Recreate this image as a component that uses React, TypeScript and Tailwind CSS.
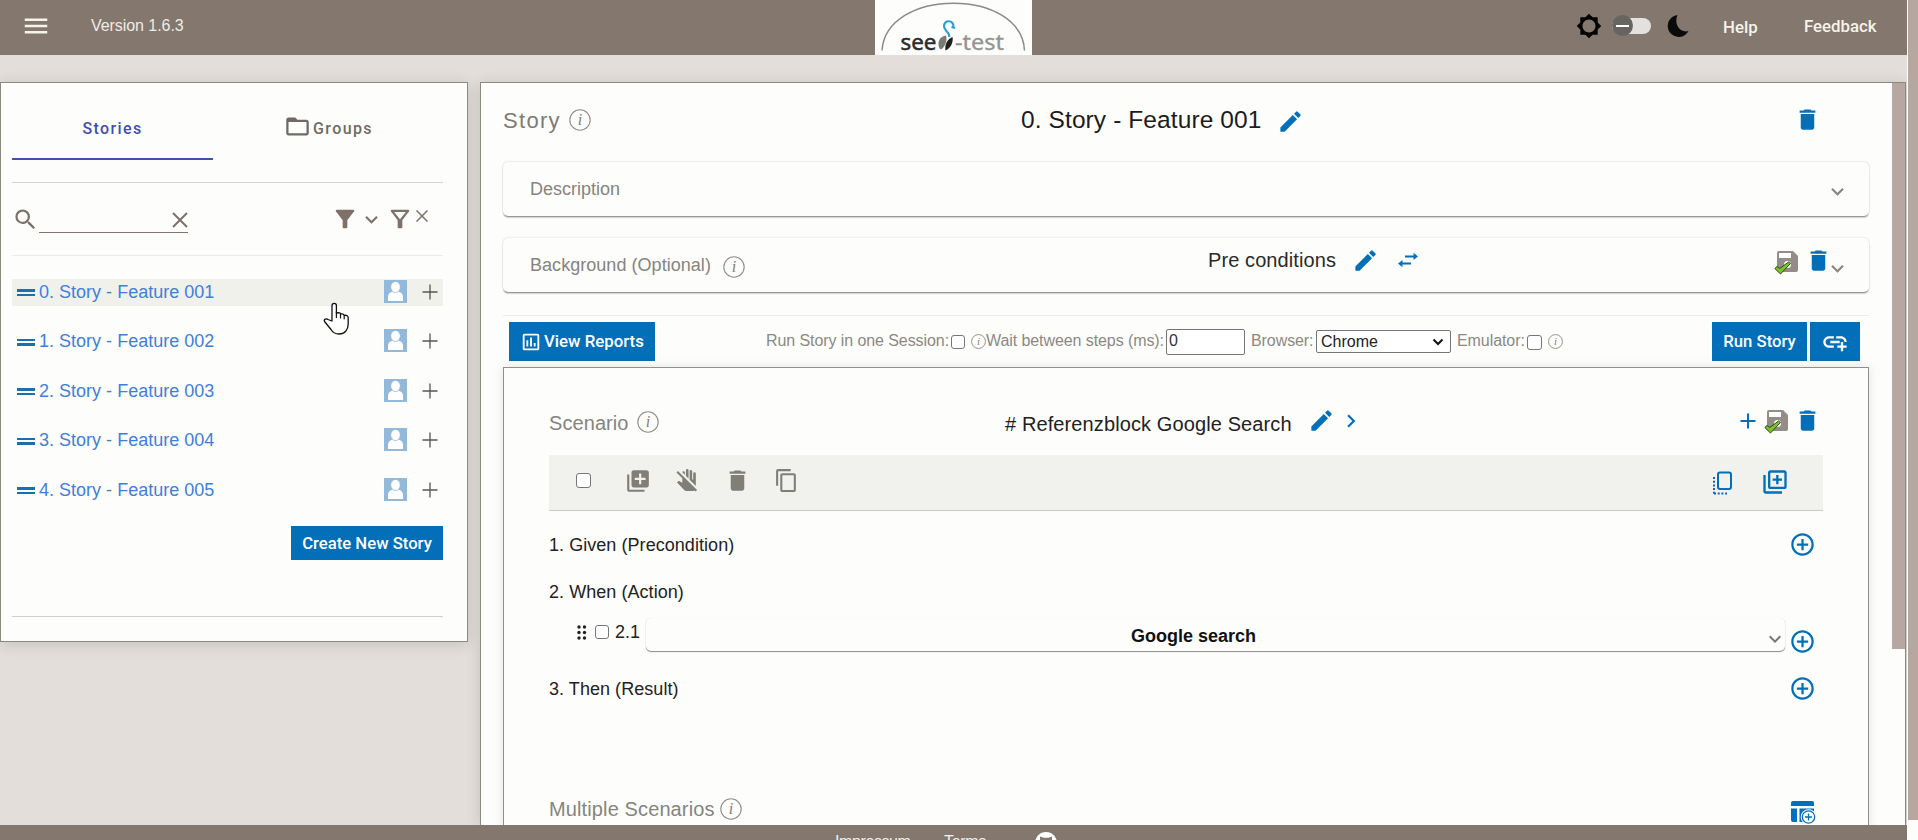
import type { ReactNode } from 'react';
import {
  MdAddCircleOutline,
  MdAddLink,
  MdBrightness5,
  MdContentCopy,
  MdDelete,
  MdDoNotTouch,
  MdEdit,
  MdExpandMore,
  MdChevronRight,
  MdFilterAlt,
  MdFolderOpen,
  MdLibraryAdd,
  MdMenu,
  MdOutlineAssessment,
  MdOutlineFilterAlt,
  MdOutlineLibraryAdd,
  MdSearch,
} from 'react-icons/md';

const stories = ['001', '002', '003', '004', '005'];

function Info({ className = '', small = false }: { className?: string; small?: boolean }) {
  return (
    <svg viewBox="0 0 22 22" className={`${small ? 'size-[15px]' : 'size-[22px]'} shrink-0 ${className}`}>
      <circle cx="11" cy="11" r="10.2" fill="none" stroke="#8f8d8a" strokeWidth={small ? 1.4 : 1.1} />
      <text x="11" y="16" textAnchor="middle" fontSize="16" fontStyle="italic" fill="#807e7a" fontFamily="Liberation Serif, serif">i</text>
    </svg>
  );
}

function Box({ className = '' }: { className?: string }) {
  return <span className={`shrink-0 rounded-[3px] border border-[#767676] bg-white ${className}`} />;
}

function Plus({ className = '', width = 1.5 }: { className?: string; width?: number }) {
  return (
    <svg viewBox="0 0 16 16" className={`size-4 shrink-0 ${className}`} stroke="currentColor" strokeWidth={width}>
      <path d="M8 .5v15M.5 8h15" />
    </svg>
  );
}

function SaveCheck({ className = '' }: { className?: string }) {
  return (
    <svg viewBox="0 0 25 25" className={`size-[25px] shrink-0 ${className}`}>
      <path d="M5 1h14l5 5v14q0 2-2 2H5q-2 0-2-2V3q0-2 2-2z" fill="#938c87" />
      <path d="M5 3h12v5H5z" fill="#fff" />
      <circle cx="13.500" cy="14.500" r="3.500" fill="#fff" />
      <path d="M.8 18.500l2.200-2 2.800 2L14.500 12l2 1.500L6.500 24z" fill="#7cc22e" stroke="#2e4a12" strokeWidth="1" strokeLinejoin="round" />
    </svg>
  );
}

function Avatar() {
  return (
    <svg viewBox="0 0 23 23" className="mb-[3px] ml-auto size-[23px] shrink-0">
      <path d="M0 0h23v23H0z" fill="#92b8da" />
      <path d="M4 21v-4.500q0-3.500 4.500-5h6q4.500 1.500 4.500 5V21z" fill="#fff" />
      <ellipse cx="11.500" cy="7" rx="4.800" ry="5.600" fill="#fff" stroke="#92b8da" strokeWidth=".8" />
    </svg>
  );
}

function Logo() {
  return (
    <div className="ml-[692px] h-[55px] w-[157px] shrink-0 bg-[#fdfdfb]">
      <svg viewBox="0 0 157 55" className="h-[55px] w-[157px]">
        <path d="M7 50.500C9 20 42 3.200 78.500 3.200S148 20 149.500 50.500" fill="none" stroke="#8b8b8b" strokeWidth="1.500" />
        <g fontFamily="Noto Sans, sans-serif" fontSize="22.500">
          <text x="25.500" y="49.500" textLength="36" lengthAdjust="spacingAndGlyphs" fill="#2b2b2b" stroke="#2b2b2b" strokeWidth=".5">see</text>
          <text x="80" y="49.500" textLength="49" lengthAdjust="spacingAndGlyphs" fill="#939393" stroke="#939393" strokeWidth=".3">-test</text>
        </g>
        <path d="M64.500 48.500C61.500 42 65 36.500 71 35.500c1.500 5.500-1 10-3.500 13-1 1-2.200 1-3 0z" fill="#7a7a78" />
        <path d="M70.500 50.500C69.500 45 72 39 77.500 37c1 5-1.500 11-7 13.500z" fill="#1f1f1d" />
        <path d="M74 37c1.500-5-5-5-5-11 0-6.500 10-6.500 9.500 1M76.500 27l3.500 1" fill="none" stroke="#2b9fd2" strokeWidth="2.200" />
      </svg>
    </div>
  );
}

function Header() {
  return (
    <header className="flex h-[55px] shrink-0 items-center bg-[#84776e] font-[Roboto] text-[16.800px] text-[#f6f4ea]">
      <MdMenu className="-mt-1 ml-[21px] size-[30px] shrink-0" />
      <span className="-mt-1 ml-10 w-[92px] font-['Liberation_Sans'] text-[16px] tracking-[-0.060px] whitespace-nowrap text-[#eeece6]">Version 1.6.3</span>
      <Logo />
      <MdBrightness5 className="-mt-1 ml-[544px] size-[26px] shrink-0 text-black" />
      <span className="-mt-1 ml-[10px] flex h-4 w-[39px] shrink-0 items-center rounded-full bg-[#e4e0de]">
        <span className="flex size-[21px] shrink-0 items-center justify-center rounded-full bg-[#686462]">
          <span className="h-[2px] w-[13px] bg-white" />
        </span>
      </span>
      <svg viewBox="0 0 22 22" className="-mt-1 ml-[16px] size-[22px] shrink-0">
        <path d="M10.500 0A11 11 0 1 0 21.500 16C13 18.500 6.500 9 10.500 0z" fill="#0a0a0a" />
      </svg>
      <span className="ml-[34px] w-[81px] font-medium">Help</span>
      <span className="-mt-px font-medium">Feedback</span>
    </header>
  );
}

function StoryRow({ index, code }: { index: number; code: string }) {
  return (
    <li className={`flex h-[27px] shrink-0 items-center pr-[5px] pl-[5px] ${index === 0 ? 'bg-[#f1f1ec]' : ''}`}>
      <span className="flex h-[7px] w-[18px] shrink-0 flex-col justify-between">
        <span className="h-[2.500px] bg-[#1a6fb0]" />
        <span className="h-[2.500px] bg-[#1a6fb0]" />
      </span>
      <span className="-mt-px ml-[4px] text-[18px] tracking-[0.010px] whitespace-nowrap text-[#3f7fdc]">{`${index}. Story - Feature ${code}`}</span>
      <Avatar />
      <Plus className="-mt-[2px] ml-[15px] text-[#555]" width={1.3} />
    </li>
  );
}

function Sidebar() {
  return (
    <aside className="flex h-[560px] w-[468px] shrink-0 flex-col border border-[#8b8a80] bg-[#fdfdfb] pr-[24px] pl-[11px] shadow-[0_2px_14px_rgba(0,0,0,0.14)]">
      <div className="flex h-[77px] shrink-0 font-[Roboto] text-[16px] font-medium tracking-[1.400px]">
        <div className="flex w-[201px] items-center justify-center border-b-2 border-[#3f51b5] pt-[16px] text-[#3f4fb0]">Stories</div>
        <div className="flex items-center pt-[14px] pl-[71px] text-[#6f6a65]">
          <MdFolderOpen className="-mt-[4px] size-[27px]" />
          <span className="ml-[2px]">Groups</span>
        </div>
      </div>
      <div className="mt-[22px] h-px shrink-0 bg-[#d3d3cf]" />
      <div className="flex h-[72px] shrink-0 items-center text-[#7d716a]">
        <MdSearch className="size-[27px] shrink-0" />
        <span className="flex h-[27px] w-[149px] shrink-0 items-end justify-end border-b border-[#84736c]">
          <svg viewBox="0 0 16 16" className="mb-[4px] size-4" stroke="currentColor" strokeWidth="2"><path d="M1 1l14 14M15 1L1 15" /></svg>
        </span>
        <MdFilterAlt className="ml-[143px] size-[28px] shrink-0" />
        <MdExpandMore className="size-[25px] shrink-0" />
        <MdOutlineFilterAlt className="ml-[2px] size-[28px] shrink-0" />
        <svg viewBox="0 0 12 12" className="mb-[7px] ml-[2px] size-3 shrink-0" stroke="currentColor" strokeWidth="1.500"><path d="M.5.500l11 11M11.500.500l-11 11" /></svg>
      </div>
      <div className="h-px shrink-0 bg-[#ececea]" />
      <ul className="mt-[23px] flex flex-col gap-[22.600px]">
        {stories.map((code, i) => <StoryRow key={code} index={i} code={code} />)}
      </ul>
      <button className="mt-[22px] flex h-[34px] w-[152px] shrink-0 items-center justify-center self-end bg-[#036fb8] pt-px font-[Roboto] text-[16.700px] font-medium whitespace-nowrap text-white">Create New Story</button>
      <div className="mt-[56px] h-px shrink-0 bg-[#cfcfcb]" />
    </aside>
  );
}

function Card({ className = '', children }: { className?: string; children: ReactNode }) {
  return (
    <section className={`flex h-[54px] shrink-0 items-center rounded-[5px] bg-[#fdfdfb] pl-[27px] shadow-[0_2px_2px_-1px_rgba(0,0,0,0.5),0_0_2px_rgba(0,0,0,0.2)] ${className}`}>
      {children}
    </section>
  );
}

function RunBar() {
  return (
    <div className="flex h-[51px] shrink-0 items-center pl-[6px] text-[16px] whitespace-nowrap text-[#8a8984]">
      <button className="flex h-[39px] w-[146px] shrink-0 items-center bg-[#036fb8] pl-[11px] font-[Roboto] text-[16.800px] font-medium text-white">
        <MdOutlineAssessment className="size-[22px]" />
        <span className="ml-[2px]">View Reports</span>
      </button>
      <span className="-mt-px ml-[111px] w-[185px] tracking-[-0.080px]">Run Story in one Session:</span>
      <Box className="size-[14px]" />
      <Info small className="ml-[6px]" />
      <span className="-mt-px w-[180px] tracking-[-0.080px]">Wait between steps (ms):</span>
      <span className="flex h-[26px] w-[79px] shrink-0 items-center rounded-[2px] border border-[#767676] bg-white pb-[2px] pl-[2px] text-[#333]">0</span>
      <span className="-mt-px ml-[6px] w-[65px] tracking-[-0.080px]">Browser:</span>
      <span className="flex h-[23px] w-[135px] shrink-0 items-center justify-between rounded-[2px] border border-[#767676] bg-white pr-[6px] pl-[4px] text-[#222]">
        Chrome
        <svg viewBox="0 0 12 8" className="h-2 w-3" fill="none" stroke="#111" strokeWidth="2"><path d="M1.500 1.500L6 6l4.500-4.500" /></svg>
      </span>
      <span className="-mt-px ml-[6px] w-[70px] tracking-[-0.080px]">Emulator:</span>
      <Box className="mt-[2px] size-[15px]" />
      <Info small className="ml-[6px]" />
      <button className="ml-[149px] h-[39px] w-[95px] shrink-0 bg-[#036fb8] font-[Roboto] text-[16.700px] font-medium text-white">Run Story</button>
      <button className="ml-[3px] flex h-[39px] w-[50px] shrink-0 items-center justify-center bg-[#036fb8] text-white">
        <MdAddLink className="size-[28px]" />
      </button>
    </div>
  );
}

function Scenario() {
  return (
    <section className="flex h-[500px] shrink-0 flex-col border border-[#8f8f8c] px-[45px] shadow-[0_0_10px_rgba(0,0,0,0.10)]">
      <div className="flex h-[87px] shrink-0 items-center pt-[20px] text-[20px] whitespace-nowrap">
        <span className="mt-[2px] w-[88px] tracking-[0.080px] text-[#85847f]">Scenario</span>
        <Info />
        <span className="mt-[4px] ml-[346px] w-[288px] tracking-[0.110px] text-[#222]">{'# Referenzblock Google Search'}</span>
        <MdEdit className="-mt-[2px] ml-[15px] size-[27px] shrink-0 text-[#036fb8]" />
        <MdChevronRight className="-mt-[2px] ml-[3px] size-[26px] shrink-0 text-[#036fb8]" />
        <Plus className="-mt-[2px] ml-[376px] text-[#036fb8]" width={2} />
        <SaveCheck className="ml-[8px]" />
        <MdDelete className="-mt-[2px] ml-[5px] size-[27px] shrink-0 text-[#036fb8]" />
      </div>
      <div className="flex h-[56px] shrink-0 items-center border-b border-[#cbcbc8] bg-[#f1f1ee] pb-[4px] pl-[27px] text-[#7f7e79]">
        <Box className="size-[15px]" />
        <MdLibraryAdd className="ml-[34px] size-[26px] shrink-0" />
        <MdDoNotTouch className="ml-[24px] size-[25px] shrink-0" />
        <MdDelete className="ml-[24px] size-[27px] shrink-0" />
        <MdContentCopy className="ml-[23px] size-[25px] shrink-0" />
        <svg viewBox="0 0 20 24" className="mt-[4px] ml-[913px] h-6 w-5 shrink-0 text-[#036fb8]" fill="none" stroke="currentColor" strokeWidth="2">
          <rect x="6" y="1.500" width="13" height="16.500" rx="2" />
          <path d="M2 6v18M2 22.500h13" strokeDasharray="2 1.700" />
        </svg>
        <MdOutlineLibraryAdd className="mt-[3px] ml-[29px] size-[28px] shrink-0 text-[#036fb8]" />
      </div>
      <div className="flex h-[68px] shrink-0 items-center justify-between pr-[7px] text-[18px] tracking-[0.050px] text-[#222]">
        1. Given (Precondition)
        <MdAddCircleOutline className="-mt-[2px] size-[27px] text-[#036fb8]" />
      </div>
      <div className="flex h-[26px] shrink-0 items-center text-[18px] tracking-[0.050px] text-[#222]">2. When (Action)</div>
      <div className="mt-[13px] flex h-[33px] shrink-0 pl-[28px] text-[18px] text-[#222]">
        <svg viewBox="0 0 10 15" className="mt-[7px] h-[15px] w-[10px] shrink-0" fill="#222">
          <circle cx="2" cy="2" r="1.700" /><circle cx="7.500" cy="2" r="1.700" />
          <circle cx="2" cy="7.500" r="1.700" /><circle cx="7.500" cy="7.500" r="1.700" />
          <circle cx="2" cy="13" r="1.700" /><circle cx="7.500" cy="13" r="1.700" />
        </svg>
        <Box className="mt-[7px] ml-[8px] size-[14px]" />
        <span className="mt-px ml-[6px] w-[31px]">2.1</span>
        <div className="flex h-[33px] w-[1139px] shrink-0 items-center rounded-[5px] shadow-[0_1px_1px_rgba(0,0,0,0.45),0_0_1px_rgba(0,0,0,0.12)]">
          <span className="mt-[4px] ml-[485px] w-[130px] text-[18px] font-bold whitespace-nowrap text-[#111]">Google search</span>
          <MdExpandMore className="mt-[9px] mr-[-2px] ml-auto size-[24px] text-[#777]" />
        </div>
        <MdAddCircleOutline className="mt-[10px] ml-[4px] size-[27px] shrink-0 text-[#036fb8]" />
      </div>
      <div className="flex h-[76px] shrink-0 items-center justify-between pr-[7px] text-[18px] tracking-[0.050px] text-[#222]">
        3. Then (Result)
        <MdAddCircleOutline className="-mt-[2px] size-[27px] text-[#036fb8]" />
      </div>
      <div className="mt-[60px] flex h-[44px] shrink-0 items-center text-[20px] text-[#85847f]">
        <span className="-mt-px w-[171px] text-[20px] tracking-[0.120px] whitespace-nowrap">Multiple Scenarios</span>
        <Info />
        <svg viewBox="0 0 26 24" className="mt-[6px] mr-[7px] ml-auto h-6 w-[26px]">
          <path d="M1 6V3q0-2 2-2h19q2 0 2 2v3zM1 8.500h6V22H3q-2 0-2-2zM9.500 8.500H24V22H9.500z" fill="#036fb8" />
          <circle cx="18.500" cy="17" r="7.800" fill="#fff" />
          <circle cx="18.500" cy="17" r="6.200" fill="#fff" stroke="#036fb8" strokeWidth="1.300" />
          <path d="M18.500 13.500v7M15 17h7" stroke="#036fb8" strokeWidth="1.300" />
        </svg>
      </div>
    </section>
  );
}

function StoryPanel() {
  return (
    <main className="ml-[12px] flex h-[743px] w-[1426px] shrink-0 overflow-hidden border border-b-0 border-[#8b8a80] bg-[#fdfdfb] shadow-[0_2px_14px_rgba(0,0,0,0.14)]">
      <div className="ml-[22px] flex w-[1366px] shrink-0 flex-col">
        <div className="mb-[5px] flex h-[74px] shrink-0 items-center whitespace-nowrap">
          <span className="w-[66px] text-[22px] tracking-[1.300px] text-[#7d7b76]">Story</span>
          <Info />
          <span className="mt-px ml-[430px] w-[240px] text-[24.500px] tracking-[0.100px] text-[#1c1c1c]">0. Story - Feature 001</span>
          <MdEdit className="mt-[3px] ml-[16px] size-[27px] text-[#036fb8]" />
          <MdDelete className="-mt-px mr-[48px] ml-auto size-[27px] text-[#036fb8]" />
        </div>
        <Card className="text-[18px] text-[#85847f]">
          Description
          <MdExpandMore className="mt-[5px] mr-[19px] ml-auto size-[25px]" />
        </Card>
        <Card className="mt-[22px] text-[18px] whitespace-nowrap text-[#85847f]">
          <span className="w-[193px] tracking-[0.040px]">Background (Optional)</span>
          <Info className="mt-[4px]" />
          <span className="-mt-[11px] ml-[463px] w-[129px] text-[20px] tracking-[0.090px] text-[#2a2a2a]">Pre conditions</span>
          <MdEdit className="-mt-[10px] ml-[15px] size-[27px] text-[#036fb8]" />
          <svg viewBox="0 0 20 16" className="-mt-[10px] ml-[19px] h-4 w-5 shrink-0 text-[#036fb8]" fill="currentColor">
            <path d="M7 3.400h8.500V.8l4.500 3.600-4.500 3.600V5.400H7zM13 10.600H4.500V8L0 11.600l4.500 3.600v-2.600H13z" />
          </svg>
          <SaveCheck className="-mt-[6px] ml-auto" />
          <MdDelete className="-mt-[10px] ml-[6px] size-[27px] shrink-0 text-[#036fb8]" />
          <MdExpandMore className="mt-[7px] mr-[19px] ml-[-7px] size-[25px] shrink-0" />
        </Card>
        <div className="mt-[23px] h-px shrink-0 bg-[#ebebe8]" />
        <RunBar />
        <Scenario />
      </div>
      <div className="ml-[23px] h-[566px] w-[13px] shrink-0 bg-[#b6a8a1]" />
    </main>
  );
}

export default function App() {
  return (
    <div className="flex h-[840px] w-[1918px] overflow-hidden bg-[#fdfdfb] font-['Liberation_Sans',sans-serif]">
      <div className="relative flex w-[1907px] shrink-0 flex-col bg-[#e3ded9]">
        <Header />
        <div className="flex h-[770px] shrink-0 items-start overflow-hidden pt-[27px]">
          <Sidebar />
          <StoryPanel />
        </div>
        <footer className="flex h-[15px] shrink-0 items-start overflow-hidden bg-[#84776e] text-[16px] leading-[18px] text-[#f3f0ea]">
          <span className="mt-[8px] ml-[835px] w-[109px] tracking-[-0.400px]">Impressum</span>
          <span className="mt-[8px] w-[91px] tracking-[-0.300px]">Terms</span>
          <svg viewBox="0 0 22 22" className="mt-[7px] size-[22px] shrink-0">
            <circle cx="11" cy="11" r="11" fill="#fff" />
            <path d="M5 9V4.500l3.500 1.200h5L17 4.500V9q1 6-6 6T5 9z" fill="#84776e" />
          </svg>
        </footer>
        <svg viewBox="0 0 26 33" className="absolute top-[302px] left-[323px] h-[33px] w-[26px]">
          <path d="M9 19V3.500a2.200 2.200 0 0 1 4.400 0V11q4-.8 4.300 1 3-.5 3.500 1.300 4-.5 4 2.700v6c0 6-3.500 10-9.200 10-4.500 0-6.500-2-8-4.500L1.500 19.500c-1-2 2-3.500 3.500-2z" fill="#fff" stroke="#111" strokeWidth="1.300" strokeLinejoin="round" />
          <path d="M13.400 10v6M17.500 12v4.500M21.200 13.300v4" stroke="#111" strokeWidth="1.200" />
        </svg>
      </div>
      <div className="ml-px h-[820px] w-[10px] shrink-0 bg-[#b6a8a1]" />
    </div>
  );
}
